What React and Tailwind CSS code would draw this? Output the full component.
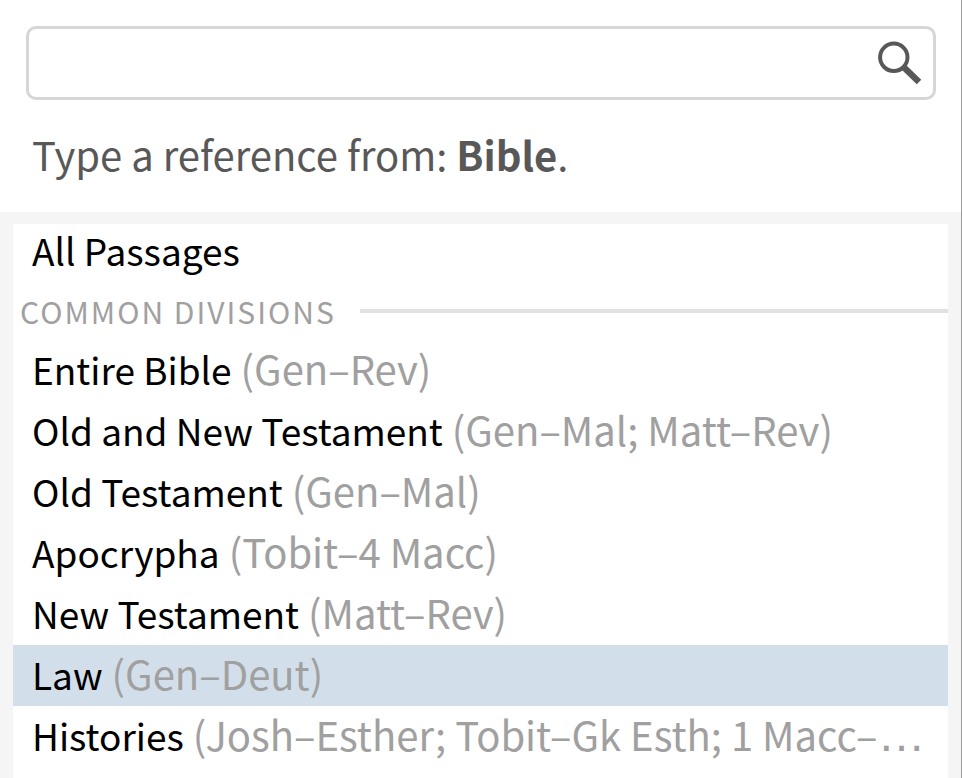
const divisions = [
  { name: "Entire Bible", range: "(Gen–Rev)" },
  { name: "Old and New Testament", range: "(Gen–Mal; Matt–Rev)" },
  { name: "Old Testament", range: "(Gen–Mal)" },
  { name: "Apocrypha", range: "(Tobit–4 Macc)" },
  { name: "New Testament", range: "(Matt–Rev)" },
  { name: "Law", range: "(Gen–Deut)", selected: true },
  { name: "Histories", range: "(Josh–Esther; Tobit–Gk Esth; 1 Macc–", more: true },
];

function SearchIcon() {
  return (
    <svg viewBox="0 0 44 44" className="size-11" fill="none" stroke="#585858" aria-hidden="true">
      <circle cx="15.8" cy="16.3" r="13.7" strokeWidth="4" />
      <path d="M25 25.5 L41 41" strokeWidth="6.5" />
    </svg>
  );
}

function PassageRow({ name, range, more, selected }) {
  return (
    <li>
      <button
        type="button"
        aria-pressed={Boolean(selected)}
        className={`block h-[61px] w-full overflow-hidden pb-1 pl-[19px] text-left text-[40px] leading-[57px] whitespace-nowrap text-black ${
          selected ? "bg-[#d2dfea]" : "bg-white"
        }`}
      >
        <span className="text-[37px]">{name}</span>{" "}
        <span className="text-[#a0a0a0]">
          {range}
          {more && <span className="font-['Liberation_Sans',sans-serif] text-[48px]">…</span>}
        </span>
      </button>
    </li>
  );
}

export default function App() {
  return (
    <main
      lang="en"
      className="flex min-h-screen flex-col border-r border-[#9c9c9c] bg-white font-['Noto_Sans_CJK_SC','Open_Sans',sans-serif]"
    >
      <header className="px-[25px] pt-[26px]">
        <form
          role="search"
          onSubmit={(event) => event.preventDefault()}
          className="ml-px flex h-[74px] items-center rounded-[10px] border-3 border-[#d6d6d6] pr-[11px]"
        >
          <input
            id="reference"
            type="text"
            aria-labelledby="reference-label"
            className="h-full min-w-0 flex-1 bg-transparent px-3 text-[37px] text-[#585858] outline-none"
          />
          <button type="submit" aria-label="Search">
            <SearchIcon />
          </button>
        </form>
        <label
          id="reference-label"
          htmlFor="reference"
          className="block pb-1 pl-[7px] text-[40px] leading-[108px] text-[#585858]"
        >
          Type a reference from: <strong>Bible</strong>.
        </label>
      </header>

      <section className="flex flex-1 flex-col bg-[#f5f5f5] px-[13px] pt-3">
        <div className="flex-1 bg-white">
          <button
            type="button"
            className="block w-full pb-1.5 pl-[19px] text-left text-[37px] leading-13 text-black"
          >
            All Passages
          </button>
          <div className="flex h-[58px] items-center gap-6 pl-[7px]">
            <h2 className="text-[30px] tracking-[2px] text-[#a0a0a0] uppercase">Common Divisions</h2>
            <div className="h-1 flex-1 bg-[#e1e1e1]" />
          </div>
          <ul>
            {divisions.map((division) => (
              <PassageRow key={division.name} {...division} />
            ))}
          </ul>
        </div>
      </section>
    </main>
  );
}
